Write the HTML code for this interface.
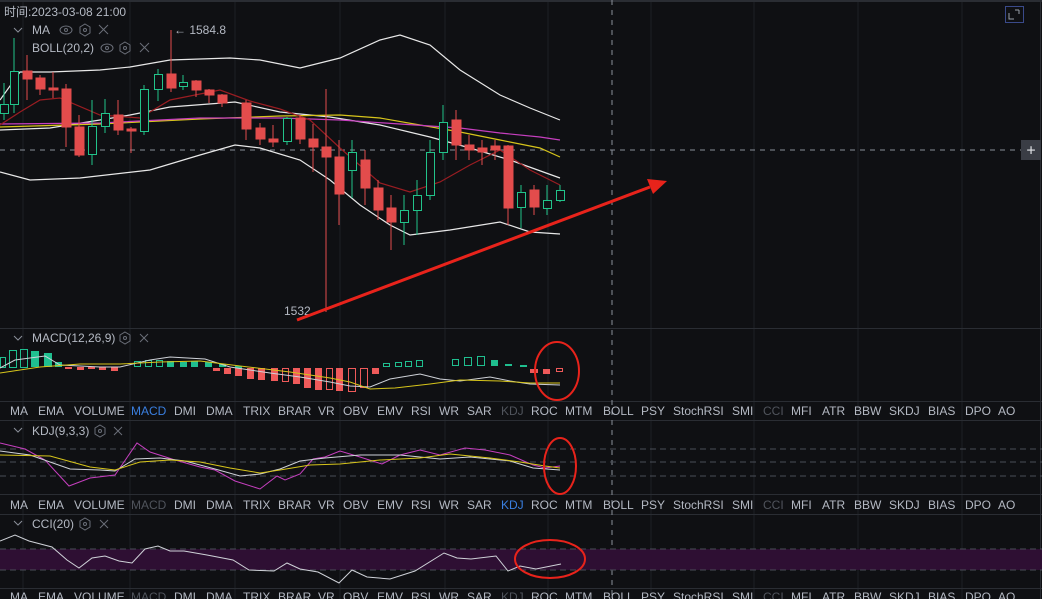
<!DOCTYPE html><html><head><meta charset="utf-8"><style>
html,body{margin:0;padding:0;background:#0f1013;width:1042px;height:599px;overflow:hidden}
svg{display:block;font-family:"Liberation Sans","Noto Sans CJK SC",sans-serif}
.t{fill:#b4b9c3;font-size:12px}
</style></head><body>
<svg width="1042" height="599" viewBox="0 0 1042 599">
<rect width="1042" height="599" fill="#0f1013"/>
<g stroke="#1e2026" stroke-width="1">
<line x1="23" y1="0" x2="23" y2="599"/><line x1="130" y1="0" x2="130" y2="599"/><line x1="235" y1="0" x2="235" y2="599"/><line x1="340" y1="0" x2="340" y2="599"/><line x1="445" y1="0" x2="445" y2="599"/><line x1="548" y1="0" x2="548" y2="599"/><line x1="651" y1="0" x2="651" y2="599"/><line x1="754" y1="0" x2="754" y2="599"/><line x1="858" y1="0" x2="858" y2="599"/><line x1="962" y1="0" x2="962" y2="599"/>
</g>
<line x1="1040.5" y1="0" x2="1040.5" y2="599" stroke="#2a2d33"/>
<line x1="0" y1="1" x2="1042" y2="1" stroke="#2a2d33" stroke-width="2"/>
<g stroke="#2a2d33"><line x1="0" y1="328.5" x2="1042" y2="328.5"/><line x1="0" y1="401.5" x2="1042" y2="401.5"/><line x1="0" y1="420.5" x2="1042" y2="420.5"/><line x1="0" y1="494.5" x2="1042" y2="494.5"/><line x1="0" y1="514.5" x2="1042" y2="514.5"/><line x1="0" y1="588.5" x2="1042" y2="588.5"/></g>
<line x1="612" y1="0" x2="612" y2="599" stroke="#8a8f99" stroke-dasharray="5,5"/>
<line x1="0" y1="150" x2="1021" y2="150" stroke="#8a8f99" stroke-dasharray="5,5"/>
<rect x="1021" y="140" width="20" height="20" fill="#3a3d45"/>
<text x="1031" y="155.5" fill="#e0e2e6" font-size="16" text-anchor="middle">+</text>
<rect x="1005.5" y="6.5" width="18" height="16" fill="none" stroke="#3a4a8a"/>
<path d="M1009 13v6h5M1019 10h-4M1019 10v4" stroke="#9aa0aa" fill="none"/>
<text x="4" y="16" class="t" fill="#c8ccd4">时间:2023-03-08 21:00</text>
<path d="M14 28l4 4 4-4" stroke="#8a8f99" fill="none"/>
<text x="32" y="34" class="t">MA</text>
<text x="32" y="52" class="t">BOLL(20,2)</text>
<g stroke="#6a6e78" fill="none">
<ellipse cx="66" cy="30" rx="6" ry="4"/><circle cx="66" cy="30" r="1.5"/><path d="M85 24l5 3v6l-5 3-5-3v-6z"/><circle cx="85" cy="30" r="1.5"/><path d="M99 25l9 9M108 25l-9 9"/>
<ellipse cx="107" cy="48" rx="6" ry="4"/><circle cx="107" cy="48" r="1.5"/><path d="M125 42l5 3v6l-5 3-5-3v-6z"/><circle cx="125" cy="48" r="1.5"/><path d="M140 43l9 9M149 43l-9 9"/>
</g>
<text x="174" y="34" class="t">← 1584.8</text>
<text x="284" y="315" class="t">1532</text>
<g fill="none" stroke-width="1.2">
<polyline stroke="#e8e8e8" points="0,100 20,72 50,72 100,70 130,67 170,60 230,58 260,60 300,68 340,58 380,40 400,35 430,45 460,70 500,95 530,108 560,120"/>
<polyline stroke="#e8e8e8" points="0,130 50,128 100,120 130,115 170,107 235,102 280,112 330,117 380,125 430,137 470,148 510,160 560,178"/>
<polyline stroke="#e8e8e8" points="0,172 30,180 80,178 150,170 200,155 235,145 260,148 300,160 330,180 360,205 390,225 410,235 450,230 500,222 530,232 560,234"/>
<polyline stroke="#d7c51b" points="0,127 100,124 200,119 280,116 340,115 380,118 420,125 460,132 500,140 540,148 560,157"/>
<polyline stroke="#c63fbf" points="0,124 100,123 200,118 280,118 340,120 400,124 460,128 500,133 540,137 560,140"/>
<polyline stroke="#9a1d22" points="0,125 20,112 40,100 60,98 100,115 140,118 170,100 190,96 220,90 250,101 280,109 310,120 340,148 380,183 410,192 440,182 470,165 500,150 530,170 560,185"/>
</g>
<g stroke-width="1">
<g stroke="#e34c4c" fill="#e34c4c">
<line x1="27" y1="55" x2="27" y2="100"/><rect x="23" y="71" width="9" height="8"/>
<line x1="40" y1="75" x2="40" y2="95"/><rect x="36" y="78" width="9" height="11"/>
<line x1="53" y1="72" x2="53" y2="98"/><rect x="49" y="88" width="9" height="2"/>
<line x1="66" y1="84" x2="66" y2="147"/><rect x="62" y="89" width="9" height="38"/>
<line x1="79" y1="115" x2="79" y2="157"/><rect x="75" y="127" width="9" height="28"/>
<line x1="118" y1="100" x2="118" y2="135"/><rect x="114" y="115" width="9" height="15"/>
<line x1="131" y1="127" x2="131" y2="153"/><rect x="127" y="129" width="9" height="2"/>
<line x1="171" y1="30" x2="171" y2="92"/><rect x="167" y="74" width="9" height="14"/>
<line x1="196" y1="80" x2="196" y2="97"/><rect x="192" y="81" width="9" height="9"/>
<line x1="209" y1="89" x2="209" y2="103"/><rect x="205" y="90" width="9" height="5"/>
<line x1="222" y1="94" x2="222" y2="107"/><rect x="218" y="95" width="9" height="8"/>
<line x1="246" y1="100" x2="246" y2="140"/><rect x="242" y="103" width="9" height="26"/>
<line x1="260" y1="123" x2="260" y2="145"/><rect x="256" y="128" width="9" height="11"/>
<line x1="273" y1="125" x2="273" y2="147"/><rect x="269" y="139" width="9" height="3"/>
<line x1="300" y1="115" x2="300" y2="144"/><rect x="296" y="118" width="9" height="21"/>
<line x1="313" y1="124" x2="313" y2="172"/><rect x="309" y="139" width="9" height="8"/>
<line x1="326" y1="89" x2="326" y2="312"/><rect x="322" y="147" width="9" height="10"/>
<line x1="339" y1="140" x2="339" y2="225"/><rect x="335" y="157" width="9" height="37"/>
<line x1="365" y1="150" x2="365" y2="205"/><rect x="361" y="160" width="9" height="28"/>
<line x1="378" y1="180" x2="378" y2="220"/><rect x="374" y="188" width="9" height="22"/>
<line x1="391" y1="195" x2="391" y2="250"/><rect x="387" y="208" width="9" height="14"/>
<line x1="456" y1="110" x2="456" y2="160"/><rect x="452" y="120" width="9" height="25"/>
<line x1="469" y1="135" x2="469" y2="160"/><rect x="465" y="145" width="9" height="5"/>
<line x1="482" y1="140" x2="482" y2="165"/><rect x="478" y="148" width="9" height="4"/>
<line x1="495" y1="140" x2="495" y2="160"/><rect x="491" y="146" width="9" height="4"/>
<line x1="508" y1="145" x2="508" y2="225"/><rect x="504" y="146" width="9" height="62"/>
<line x1="534" y1="185" x2="534" y2="215"/><rect x="530" y="190" width="9" height="17"/>
</g>
<g stroke="#22c38a" fill="#0f1013">
<line x1="4" y1="83" x2="4" y2="120"/><rect x="0.5" y="104.5" width="8" height="9"/>
<line x1="14" y1="38" x2="14" y2="113"/><rect x="10.5" y="71.5" width="8" height="33"/>
<line x1="92" y1="100" x2="92" y2="165"/><rect x="88.5" y="126.5" width="8" height="28"/>
<line x1="105" y1="99" x2="105" y2="133"/><rect x="101.5" y="113.5" width="8" height="13"/>
<line x1="144" y1="85" x2="144" y2="135"/><rect x="140.5" y="89.5" width="8" height="42"/>
<line x1="158" y1="69" x2="158" y2="101"/><rect x="154.5" y="74.5" width="8" height="15"/>
<line x1="183" y1="75" x2="183" y2="90"/><rect x="179.5" y="82.5" width="8" height="4"/>
<line x1="287" y1="117" x2="287" y2="145"/><rect x="283.5" y="118.5" width="8" height="23"/>
<line x1="352" y1="140" x2="352" y2="198"/><rect x="348.5" y="152.5" width="8" height="18"/>
<line x1="404" y1="195" x2="404" y2="245"/><rect x="400.5" y="210.5" width="8" height="12"/>
<line x1="417" y1="180" x2="417" y2="235"/><rect x="413.5" y="195.5" width="8" height="15"/>
<line x1="430" y1="140" x2="430" y2="200"/><rect x="426.5" y="152.5" width="8" height="43"/>
<line x1="443" y1="105" x2="443" y2="160"/><rect x="439.5" y="122.5" width="8" height="30"/>
<line x1="521" y1="185" x2="521" y2="228"/><rect x="517.5" y="192.5" width="8" height="15"/>
<line x1="547" y1="185" x2="547" y2="215"/><rect x="543.5" y="200.5" width="8" height="8"/>
<line x1="560" y1="185" x2="560" y2="202"/><rect x="556.5" y="190.5" width="8" height="10"/>
</g>
</g>
<line x1="297" y1="320" x2="650" y2="187" stroke="#e8231b" stroke-width="3"/>
<path d="M667 181l-20-2 6 15z" fill="#e8231b"/>
<!-- MACD -->
<path d="M14 336l4 4 4-4" stroke="#8a8f99" fill="none"/>
<text x="32" y="342" class="t">MACD(12,26,9)</text>
<g stroke="#6a6e78" fill="none"><path d="M125 332l5 3v6l-5 3-5-3v-6z"/><circle cx="125" cy="338" r="1.5"/><path d="M140 334l8 8M148 334l-8 8"/></g>
<g fill="#1fbf8f"><rect x="31" y="351" width="8" height="16"/><rect x="44" y="353" width="8" height="14"/><rect x="55" y="362" width="7" height="5"/><rect x="167" y="361" width="7" height="6"/><rect x="180" y="362" width="7" height="5"/><rect x="191" y="361" width="7" height="6"/><rect x="205" y="362" width="7" height="5"/><rect x="219" y="364" width="7" height="3"/><rect x="235" y="366" width="7" height="2"/><rect x="491" y="360" width="7" height="6"/><rect x="505" y="364" width="7" height="2"/><rect x="520" y="365" width="7" height="2"/></g>
<g fill="none" stroke="#1fbf8f"><rect x="0.5" y="357.5" width="5" height="10"/><rect x="9.5" y="350.5" width="7" height="17"/><rect x="20.5" y="349.5" width="7" height="18"/><rect x="134.5" y="361.5" width="6" height="5"/><rect x="145.5" y="360.5" width="6" height="6"/><rect x="156.5" y="360.5" width="6" height="6"/><rect x="383.5" y="363.5" width="6" height="3"/><rect x="395.5" y="362.5" width="6" height="4"/><rect x="405.5" y="361.5" width="6" height="5"/><rect x="416.5" y="360.5" width="6" height="6"/><rect x="452.5" y="359.5" width="6" height="6"/><rect x="464.5" y="357.5" width="7" height="8"/><rect x="477.5" y="356.5" width="7" height="9"/></g>
<g fill="#ef5a5a"><rect x="65" y="367" width="7" height="2"/><rect x="77" y="367" width="7" height="3"/><rect x="88" y="367" width="7" height="2"/><rect x="99" y="367" width="7" height="3"/><rect x="111" y="367" width="7" height="4"/><rect x="213" y="368" width="7" height="3"/><rect x="224" y="368" width="7" height="6"/><rect x="235" y="368" width="7" height="8"/><rect x="247" y="368" width="7" height="11"/><rect x="258" y="368" width="7" height="12"/><rect x="271" y="368" width="7" height="13"/><rect x="293" y="368" width="7" height="16"/><rect x="304" y="368" width="7" height="20"/><rect x="315" y="368" width="7" height="22"/><rect x="336" y="368" width="7" height="23"/><rect x="372" y="368" width="7" height="6"/><rect x="530" y="369" width="8" height="4"/><rect x="543" y="369" width="7" height="5"/></g>
<g fill="none" stroke="#ef5a5a"><rect x="282.5" y="368.5" width="6" height="13"/><rect x="326.5" y="368.5" width="6" height="21"/><rect x="348.5" y="368.5" width="7" height="23"/><rect x="360.5" y="368.5" width="7" height="19"/><rect x="556.5" y="368.5" width="6" height="3"/></g>
<polyline fill="none" stroke="#cfd2d8" points="0,368 15,360 45,356 60,365 100,367 120,367 150,360 170,357 205,359 230,367 270,373 300,377 330,382 350,386 370,387 390,379 420,374 440,379 460,381 490,377 510,381 530,384 560,385"/>
<polyline fill="none" stroke="#d7c51b" points="0,373 40,367 80,364 120,364 160,362 200,361 240,366 290,372 330,378 350,382 370,389 395,388 430,384 460,380 500,381 530,383 560,383"/>
<g class="t">
<text x="10" y="415">MA</text><text x="38" y="415">EMA</text><text x="74" y="415">VOLUME</text><text x="131" y="415" fill="#3a7fe0">MACD</text><text x="174" y="415">DMI</text><text x="206" y="415">DMA</text><text x="243" y="415">TRIX</text><text x="278" y="415">BRAR</text><text x="318" y="415">VR</text><text x="343" y="415">OBV</text><text x="377" y="415">EMV</text><text x="411" y="415">RSI</text><text x="439" y="415">WR</text><text x="467" y="415">SAR</text><text x="501" y="415" fill="#50545c">KDJ</text><text x="531" y="415">ROC</text><text x="565" y="415">MTM</text><text x="603" y="415">BOLL</text><text x="641" y="415">PSY</text><text x="673" y="415">StochRSI</text><text x="732" y="415">SMI</text><text x="763" y="415" fill="#50545c">CCI</text><text x="791" y="415">MFI</text><text x="822" y="415">ATR</text><text x="854" y="415">BBW</text><text x="889" y="415">SKDJ</text><text x="928" y="415">BIAS</text><text x="965" y="415">DPO</text><text x="998" y="415">AO</text>
<text x="10" y="509">MA</text><text x="38" y="509">EMA</text><text x="74" y="509">VOLUME</text><text x="131" y="509" fill="#50545c">MACD</text><text x="174" y="509">DMI</text><text x="206" y="509">DMA</text><text x="243" y="509">TRIX</text><text x="278" y="509">BRAR</text><text x="318" y="509">VR</text><text x="343" y="509">OBV</text><text x="377" y="509">EMV</text><text x="411" y="509">RSI</text><text x="439" y="509">WR</text><text x="467" y="509">SAR</text><text x="501" y="509" fill="#3a7fe0">KDJ</text><text x="531" y="509">ROC</text><text x="565" y="509">MTM</text><text x="603" y="509">BOLL</text><text x="641" y="509">PSY</text><text x="673" y="509">StochRSI</text><text x="732" y="509">SMI</text><text x="763" y="509" fill="#50545c">CCI</text><text x="791" y="509">MFI</text><text x="822" y="509">ATR</text><text x="854" y="509">BBW</text><text x="889" y="509">SKDJ</text><text x="928" y="509">BIAS</text><text x="965" y="509">DPO</text><text x="998" y="509">AO</text>
<text x="10" y="601">MA</text><text x="38" y="601">EMA</text><text x="74" y="601">VOLUME</text><text x="131" y="601" fill="#50545c">MACD</text><text x="174" y="601">DMI</text><text x="206" y="601">DMA</text><text x="243" y="601">TRIX</text><text x="278" y="601">BRAR</text><text x="318" y="601">VR</text><text x="343" y="601">OBV</text><text x="377" y="601">EMV</text><text x="411" y="601">RSI</text><text x="439" y="601">WR</text><text x="467" y="601">SAR</text><text x="501" y="601" fill="#50545c">KDJ</text><text x="531" y="601">ROC</text><text x="565" y="601">MTM</text><text x="603" y="601">BOLL</text><text x="641" y="601">PSY</text><text x="673" y="601">StochRSI</text><text x="732" y="601">SMI</text><text x="763" y="601" fill="#50545c">CCI</text><text x="791" y="601">MFI</text><text x="822" y="601">ATR</text><text x="854" y="601">BBW</text><text x="889" y="601">SKDJ</text><text x="928" y="601">BIAS</text><text x="965" y="601">DPO</text><text x="998" y="601">AO</text>
</g>
<!-- KDJ -->
<path d="M14 428l4 4 4-4" stroke="#8a8f99" fill="none"/>
<text x="32" y="435" class="t">KDJ(9,3,3)</text>
<g stroke="#6a6e78" fill="none"><path d="M100 425l5 3v6l-5 3-5-3v-6z"/><circle cx="100" cy="431" r="1.5"/><path d="M114 427l8 8M122 427l-8 8"/></g>
<g stroke="#4a4e57" stroke-dasharray="6,4"><line x1="0" y1="449" x2="1042" y2="449"/><line x1="0" y1="462" x2="1042" y2="462"/><line x1="0" y1="476" x2="1042" y2="476"/></g>
<polyline fill="none" stroke="#c63fbf" points="0,443 25,449 45,460 69,486 90,478 115,475 137,443 150,452 175,460 200,467 215,470 235,481 260,489 277,476 285,480 300,474 313,459 325,457 340,451 360,457 382,464 400,455 420,450 440,455 465,448 485,450 510,455 533,465 545,468 560,466"/>
<polyline fill="none" stroke="#cfd2d8" points="0,451 30,455 70,469 100,470 115,471 135,459 160,458 185,461 215,469 240,476 260,474 280,469 300,461 325,458 360,455 385,455 400,455 440,459 470,457 510,461 533,468 560,470"/>
<polyline fill="none" stroke="#d7c51b" points="0,455 50,456 90,467 115,470 140,462 170,460 200,462 230,468 260,473 280,470 310,465 340,464 380,460 420,458 450,454 490,458 520,462 545,466 560,468"/>
<!-- CCI -->
<path d="M14 521l4 4 4-4" stroke="#8a8f99" fill="none"/>
<text x="32" y="528" class="t">CCI(20)</text>
<g stroke="#6a6e78" fill="none"><path d="M85 518l5 3v6l-5 3-5-3v-6z"/><circle cx="85" cy="524" r="1.5"/><path d="M100 520l8 8M108 520l-8 8"/></g>
<rect x="0" y="549" width="1042" height="21" fill="#2e0f33"/>
<g stroke="#4a4e57" stroke-dasharray="6,4"><line x1="0" y1="549" x2="1042" y2="549"/><line x1="0" y1="570" x2="1042" y2="570"/></g>
<polyline fill="none" stroke="#cfd2d8" points="0,541 15,535 29,541 52,547 67,560 79,568 92,558 105,556 119,561 132,563 145,549 158,546 170,551 184,551 207,555 233,560 249,570 274,571 287,563 300,569 318,572 339,583 352,570 367,577 390,579 415,571 444,553 457,558 471,559 496,556 508,571 520,566 536,569 561,564"/>
<g fill="none" stroke="#e8231b" stroke-width="2">
<ellipse cx="557" cy="371" rx="22" ry="29"/>
<ellipse cx="560" cy="466" rx="16" ry="28"/>
<ellipse cx="550" cy="559" rx="35" ry="19"/>
</g>
</svg>
</body></html>
